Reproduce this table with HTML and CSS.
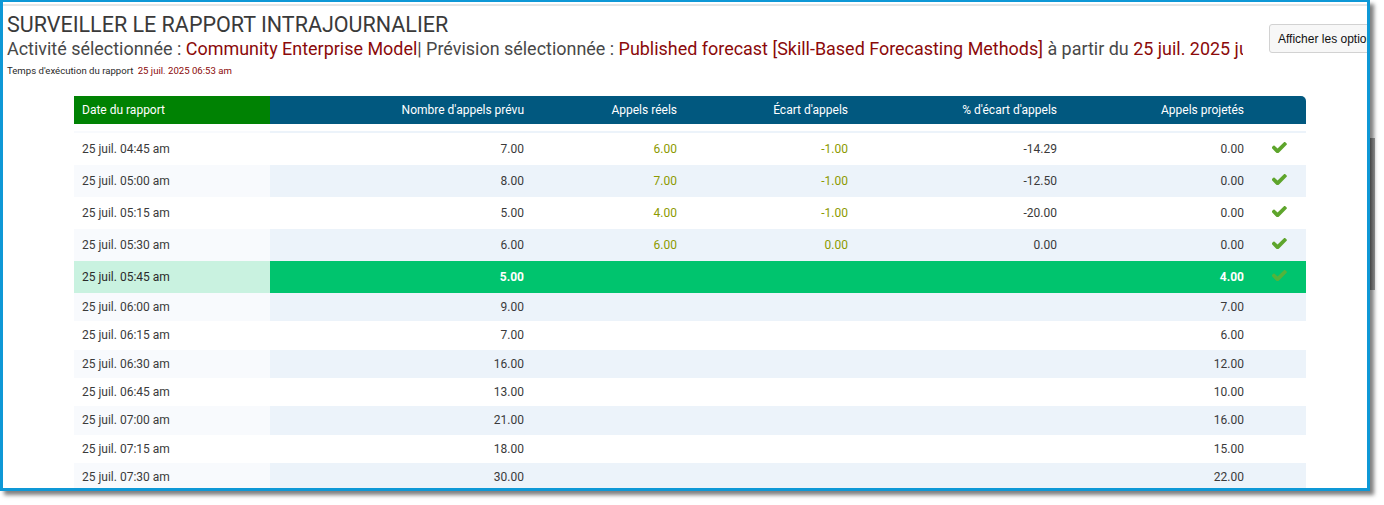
FILE: index.html
```html
<!DOCTYPE html>
<html lang="fr">
<head>
<meta charset="utf-8">
<title>Surveiller le rapport intrajournalier</title>
<link rel="stylesheet" href="styles.css">
</head>
<body>
<div class="frame">
  <div class="topline"></div>
  <div class="top">
    <div class="titles">
      <h1 class="title">SURVEILLER LE RAPPORT INTRAJOURNALIER</h1>
      <div class="sub">Activité sélectionnée : <span class="red">Community Enterprise Model</span>| Prévision sélectionnée : <span class="red">Published forecast [Skill-Based Forecasting Methods]</span> à partir du <span class="red">25 juil. 2025 jusqu'au 25 juil. 2025</span></div>
      <div class="meta">Temps d'exécution du rapport <span class="red when">25 juil. 2025 06:53 am</span></div>
    </div>
    <button class="btn" type="button">Afficher les options</button>
  </div>

  <div class="table">
    <div class="row head">
      <div class="c first">Date du rapport</div>
      <div class="c num">Nombre d'appels prévu</div>
      <div class="c num">Appels réels</div>
      <div class="c num">Écart d'appels</div>
      <div class="c num">% d'écart d'appels</div>
      <div class="c num">Appels projetés</div>
      <div class="c"></div>
    </div>
    <div class="gap"></div>
    <div class="row alt partial">
      <div class="c first"></div><div class="c"></div><div class="c"></div><div class="c"></div><div class="c"></div><div class="c"></div><div class="c"></div>
    </div>

    <div class="row tall">
      <div class="c first">25 juil. 04:45 am</div>
      <div class="c num">7.00</div>
      <div class="c num ol">6.00</div>
      <div class="c num ol">-1.00</div>
      <div class="c num">-14.29</div>
      <div class="c num">0.00</div>
      <div class="c chk"><svg viewBox="150 390 1530 1040" width="15" height="11"><path d="M1671 566q0 40-28 68l-724 724-136 136q-28 28-68 28t-68-28l-136-136-362-362q-28-28-28-68t28-68l136-136q28-28 68-28t68 28l294 295 656-657q28-28 68-28t68 28l136 136q28 28 28 68z"/></svg></div>
    </div>
    <div class="row tall alt">
      <div class="c first">25 juil. 05:00 am</div>
      <div class="c num">8.00</div>
      <div class="c num ol">7.00</div>
      <div class="c num ol">-1.00</div>
      <div class="c num">-12.50</div>
      <div class="c num">0.00</div>
      <div class="c chk"><svg viewBox="150 390 1530 1040" width="15" height="11"><path d="M1671 566q0 40-28 68l-724 724-136 136q-28 28-68 28t-68-28l-136-136-362-362q-28-28-28-68t28-68l136-136q28-28 68-28t68 28l294 295 656-657q28-28 68-28t68 28l136 136q28 28 28 68z"/></svg></div>
    </div>
    <div class="row tall">
      <div class="c first">25 juil. 05:15 am</div>
      <div class="c num">5.00</div>
      <div class="c num ol">4.00</div>
      <div class="c num ol">-1.00</div>
      <div class="c num">-20.00</div>
      <div class="c num">0.00</div>
      <div class="c chk"><svg viewBox="150 390 1530 1040" width="15" height="11"><path d="M1671 566q0 40-28 68l-724 724-136 136q-28 28-68 28t-68-28l-136-136-362-362q-28-28-28-68t28-68l136-136q28-28 68-28t68 28l294 295 656-657q28-28 68-28t68 28l136 136q28 28 28 68z"/></svg></div>
    </div>
    <div class="row tall alt">
      <div class="c first">25 juil. 05:30 am</div>
      <div class="c num">6.00</div>
      <div class="c num ol">6.00</div>
      <div class="c num ol">0.00</div>
      <div class="c num">0.00</div>
      <div class="c num">0.00</div>
      <div class="c chk"><svg viewBox="150 390 1530 1040" width="15" height="11"><path d="M1671 566q0 40-28 68l-724 724-136 136q-28 28-68 28t-68-28l-136-136-362-362q-28-28-28-68t28-68l136-136q28-28 68-28t68 28l294 295 656-657q28-28 68-28t68 28l136 136q28 28 28 68z"/></svg></div>
    </div>
    <div class="row tall cur">
      <div class="c first">25 juil. 05:45 am</div>
      <div class="c num">5.00</div>
      <div class="c num"></div>
      <div class="c num"></div>
      <div class="c num"></div>
      <div class="c num">4.00</div>
      <div class="c chk"><svg viewBox="150 390 1530 1040" width="15" height="11"><path d="M1671 566q0 40-28 68l-724 724-136 136q-28 28-68 28t-68-28l-136-136-362-362q-28-28-28-68t28-68l136-136q28-28 68-28t68 28l294 295 656-657q28-28 68-28t68 28l136 136q28 28 28 68z"/></svg></div>
    </div>
    <div class="row alt">
      <div class="c first">25 juil. 06:00 am</div>
      <div class="c num">9.00</div><div class="c"></div><div class="c"></div><div class="c"></div>
      <div class="c num">7.00</div><div class="c"></div>
    </div>
    <div class="row">
      <div class="c first">25 juil. 06:15 am</div>
      <div class="c num">7.00</div><div class="c"></div><div class="c"></div><div class="c"></div>
      <div class="c num">6.00</div><div class="c"></div>
    </div>
    <div class="row alt">
      <div class="c first">25 juil. 06:30 am</div>
      <div class="c num">16.00</div><div class="c"></div><div class="c"></div><div class="c"></div>
      <div class="c num">12.00</div><div class="c"></div>
    </div>
    <div class="row">
      <div class="c first">25 juil. 06:45 am</div>
      <div class="c num">13.00</div><div class="c"></div><div class="c"></div><div class="c"></div>
      <div class="c num">10.00</div><div class="c"></div>
    </div>
    <div class="row alt">
      <div class="c first">25 juil. 07:00 am</div>
      <div class="c num">21.00</div><div class="c"></div><div class="c"></div><div class="c"></div>
      <div class="c num">16.00</div><div class="c"></div>
    </div>
    <div class="row">
      <div class="c first">25 juil. 07:15 am</div>
      <div class="c num">18.00</div><div class="c"></div><div class="c"></div><div class="c"></div>
      <div class="c num">15.00</div><div class="c"></div>
    </div>
    <div class="row alt">
      <div class="c first">25 juil. 07:30 am</div>
      <div class="c num">30.00</div><div class="c"></div><div class="c"></div><div class="c"></div>
      <div class="c num">22.00</div><div class="c"></div>
    </div>
  </div>
</div>
<div class="edge"></div>
</body>
</html>
```

FILE: styles.css
```css
html, body {
  margin: 0;
  padding: 0;
  background: #ffffff;
}

body {
  width: 1384px;
  height: 505px;
  overflow: hidden;
  position: relative;
  font-family: Roboto, "Liberation Sans", Arial, sans-serif;
  color: #3a3a3a;
}

.frame {
  width: 1364px;
  height: 486px;
  border-style: solid;
  border-color: #0e98d6;
  border-width: 2px 3px 3px 3px;
  box-shadow: 4px 4px 4px rgba(0, 0, 0, 0.5);
  overflow: hidden;
  background: #ffffff;
}

.topline {
  height: 2px;
  margin-top: 2px;
  background: #e6e6e6;
}

.top {
  display: flex;
  align-items: flex-start;
  height: 90px;
}

.titles {
  width: 1236px;
  padding-left: 4px;
  overflow: hidden;
  white-space: nowrap;
  flex-shrink: 0;
}

.title {
  margin: 6px 0 0 0;
  font-size: 21.5px;
  line-height: 26px;
  font-weight: 400;
  color: #3a3a3a;
}

.sub {
  font-size: 17.95px;
  line-height: 22px;
  color: #484848;
}

.red {
  color: #8b0a0a;
}

.meta {
  margin-top: 4px;
  font-size: 9.6px;
  line-height: 14px;
  color: #2a2a2a;
}

.meta .when {
  margin-left: 2px;
  color: #8b0a0a;
}

.btn {
  flex-shrink: 0;
  margin-left: 26px;
  margin-top: 18px;
  height: 29px;
  padding: 0 8px;
  border: 1px solid #d2d2d2;
  border-radius: 3px;
  background: #f7f7f7;
  font-family: "Liberation Sans", Arial, sans-serif;
  font-size: 12px;
  color: #111111;
  white-space: nowrap;
}

.table {
  margin-left: 71px;
  width: 1232px;
}

.row {
  display: grid;
  grid-template-columns: 196px 262px 153px 171px 209px 187px 54px;
  height: 28.33px;
  font-size: 12px;
  color: #3a3a3a;
}

.row.tall {
  height: 32px;
}

.c {
  display: flex;
  align-items: center;
  padding: 0 8px;
  white-space: nowrap;
  overflow: hidden;
}

.c.num {
  justify-content: flex-end;
}

.c.ol {
  color: #8c9a00;
}

.c.chk {
  justify-content: center;
  padding: 0;
}

.c.chk svg {
  fill: #5ea52c;
  margin-top: -3px;
}

.row.head {
  height: 28px;
  background: #01587f;
  color: #ffffff;
  border-radius: 0 5px 0 0;
  overflow: hidden;
}

.row.head .first {
  background: #008203;
}

.gap {
  height: 7px;
}

.row.partial {
  height: 2px;
}

.row.alt .c {
  background: #ecf3fa;
}

.row.alt .c.first {
  background: #f8fafd;
}

.row.cur .c {
  background: #00c46e;
  color: #ffffff;
  font-weight: 700;
}

.row.cur .c.first {
  background: #c9f2e0;
  color: #2a2a2a;
  font-weight: 400;
}

.row.cur .c.chk svg {
  fill: #6fae2a;
  opacity: 0.75;
}

.edge {
  position: absolute;
  left: 1370px;
  top: 138px;
  width: 5px;
  height: 152px;
  background: linear-gradient(to right, #444444, #888888);
}
```
